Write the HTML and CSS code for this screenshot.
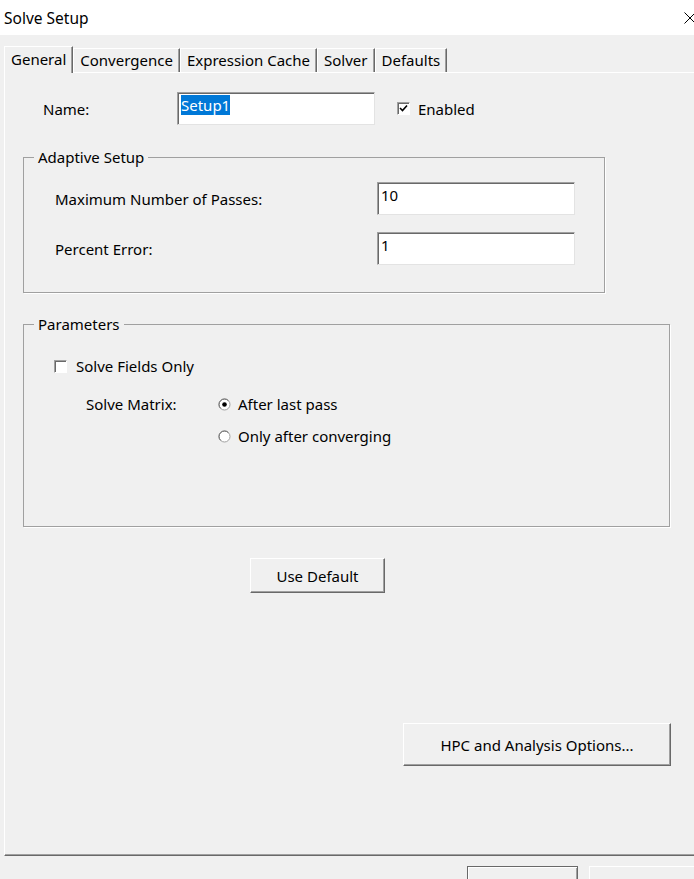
FILE: index.html
```html
<!DOCTYPE html>
<html lang="en">
<head>
    <meta charset="UTF-8">
    <meta name="viewport" content="width=device-width, initial-scale=1.0">
    <title>Solve Setup</title>
    <link rel="stylesheet" href="styles.css">
</head>
<body>
    <div class="titlebar">
        <span class="title">Solve Setup</span>
        <svg class="close" width="12" height="12" viewBox="0 0 12 12">
            <path d="M0.5 0.5 L11.5 11.5 M11.5 0.5 L0.5 11.5" stroke="#000" stroke-width="1" fill="none"/>
        </svg>
    </div>

    <div class="tabs">
        <div class="tab active">General</div>
        <div class="tab">Convergence</div>
        <div class="tab">Expression Cache</div>
        <div class="tab">Solver</div>
        <div class="tab">Defaults</div>
    </div>

    <div class="panel">
        <div class="name-row">
            <span class="name-label">Name:</span>
            <div class="edit"><span class="selected">Setup1</span></div>
            <span class="check checked">
                <svg width="9" height="9" viewBox="0 0 9 9"><path d="M1 4 L3.5 6.5 L8 1.5" stroke="#000" stroke-width="1.6" fill="none"/></svg>
            </span>
            <span class="check-label">Enabled</span>
        </div>

        <fieldset class="group adaptive">
            <legend>Adaptive Setup</legend>
            <div class="group-body field-grid">
                <span>Maximum Number of Passes:</span>
                <div class="edit">10</div>
                <span>Percent Error:</span>
                <div class="edit">1</div>
            </div>
        </fieldset>

        <fieldset class="group params">
            <legend>Parameters</legend>
            <div class="group-body">
                <div class="check-row">
                    <span class="check"></span>
                    <span class="check-label">Solve Fields Only</span>
                </div>
                <div class="matrix">
                    <span class="matrix-label">Solve Matrix:</span>
                    <div class="radios">
                        <div class="radio-row">
                            <svg class="radio" width="13" height="13" viewBox="0 0 13 13">
                                <circle cx="6.5" cy="6.5" r="5.5" fill="#fff" stroke="#a0a0a0"/>
                                <path d="M2.6 10.4 A5.5 5.5 0 0 1 10.4 2.6" stroke="#696969" fill="none"/>
                                <circle cx="6.5" cy="6.5" r="2.3" fill="#000"/>
                            </svg>
                            <span>After last pass</span>
                        </div>
                        <div class="radio-row">
                            <svg class="radio" width="13" height="13" viewBox="0 0 13 13">
                                <circle cx="6.5" cy="6.5" r="5.5" fill="#fff" stroke="#a0a0a0"/>
                                <path d="M2.6 10.4 A5.5 5.5 0 0 1 10.4 2.6" stroke="#696969" fill="none"/>
                            </svg>
                            <span>Only after converging</span>
                        </div>
                    </div>
                </div>
            </div>
        </fieldset>

        <button class="btn use-default">Use Default</button>
        <button class="btn hpc">HPC and Analysis Options...</button>
    </div>

    <div class="footer">
        <button class="btn default">确定</button>
        <button class="btn">取消</button>
    </div>
</body>
</html>
```

FILE: styles.css
```css
body { margin: 0; width: 694px; height: 879px; overflow: hidden; background: #f0f0f0; color: #000; font-family: "Noto Sans", "Noto Sans CJK SC", sans-serif; font-size: 15px; }

.titlebar { height: 35px; background: #fff; display: flex; align-items: center; justify-content: space-between; padding-left: 4px; font-size: 15.5px; }
.close { margin-right: -2px; }

.tabs { display: flex; align-items: flex-end; height: 26px; margin-top: 11px; padding-left: 4px; }
.tab { height: 23px; line-height: 22px; padding: 0 6px; border-top: 1px solid #fff; border-left: 1px solid #fff; border-right: 1px solid #696969; box-shadow: inset -1px 0 0 #a0a0a0; box-sizing: content-box; }
.tab.active { height: 26px; line-height: 24px; margin-bottom: -1px; position: relative; background: #f0f0f0; padding: 0 6px; }

.panel { width: 720px; border-top: 1px solid #fff; border-left: 1px solid #fff; border-bottom: 1px solid #696969; box-shadow: inset 0 -1px 0 #a0a0a0; margin-left: 4px; padding: 19px 0 0 18px; box-sizing: content-box; height: 763px; }

.name-row { display: flex; align-items: center; margin-left: 20px; }
.name-label { width: 134px; }

.edit { width: 198px; height: 33px; box-sizing: border-box; background: #fff; border: 1px solid; border-color: #a0a0a0 #e3e3e3 #e3e3e3 #a0a0a0; box-shadow: inset 1px 1px 0 #696969; padding: 2px 2px 0 3px; line-height: 20px; }
.selected { background: #0078d7; color: #fff; display: inline-block; }

.check { width: 13px; height: 13px; box-sizing: border-box; background: #fff; border: 1px solid; border-color: #a0a0a0 #fff #fff #a0a0a0; box-shadow: inset 1px 1px 0 #696969; display: inline-flex; align-items: center; justify-content: center; }
.name-row .check { margin-left: 22px; }
.check-label { margin-left: 8px; }

.group { margin: 22px 0 0 0; padding: 0; border: 1px solid #a0a0a0; box-shadow: 1px 1px 0 #fff; box-sizing: border-box; }
.group legend { margin-left: 10px; padding: 0 4px; line-height: 20px; }
.adaptive { width: 582px; }
.params { width: 647px; margin-top: 21px; }

.group-body { padding: 15px 0 27px 31px; }
.field-grid { display: grid; grid-template-columns: 322px 198px; row-gap: 17px; align-items: center; }

.params .group-body { padding: 22px 0 80px 30px; }
.check-row { display: flex; align-items: center; height: 20px; }
.check-row .check-label { margin-left: 9px; }
.matrix { display: flex; margin: 18px 0 0 32px; }
.matrix-label { width: 132px; line-height: 20px; }
.radios { display: flex; flex-direction: column; gap: 12px; }
.radio-row { display: flex; align-items: center; height: 20px; gap: 7px; }

.btn { font: inherit; color: #000; background: #f0f0f0; border: 1px solid; border-color: #fff #696969 #696969 #fff; box-shadow: inset -1px -1px 0 #a0a0a0; padding: 0; display: block; }
.use-default { width: 135px; height: 35px; margin: 31px 0 0 227px; }
.hpc { width: 268px; height: 43px; margin: 130px 0 0 380px; }

.footer { display: flex; gap: 11px; margin-top: 10px; padding-left: 467px; }
.footer .btn { width: 111px; height: 34px; padding-top: 8px; flex: none; }
.footer .btn.default { border-color: #696969; box-shadow: inset 1px 1px 0 #fff, inset -1px -1px 0 #a0a0a0; }
```
